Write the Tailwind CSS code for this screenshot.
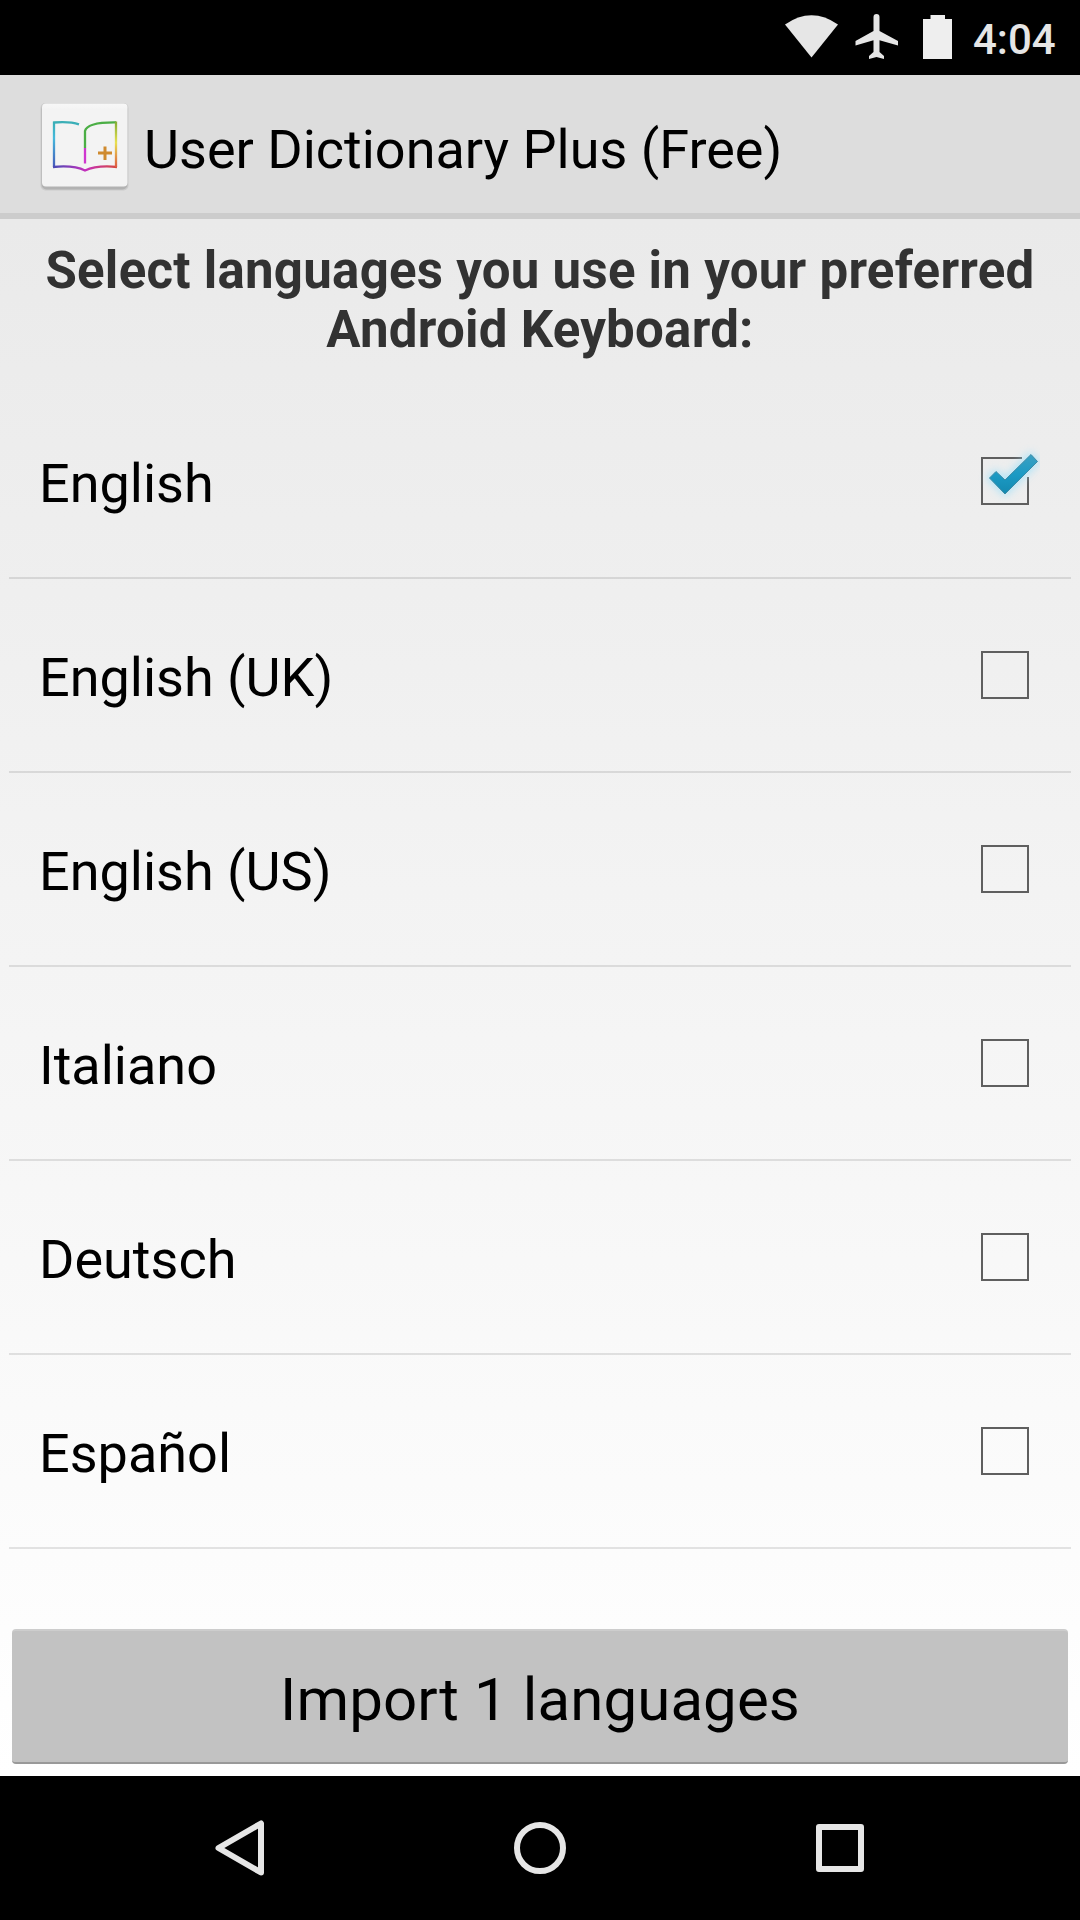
<!DOCTYPE html>
<html lang="en">
<head>
<meta charset="utf-8">
<title>User Dictionary Plus</title>
<script src="https://cdn.jsdelivr.net/npm/@tailwindcss/browser@4"></script>
</head>
<body class="w-[1080px] h-[1920px] overflow-hidden flex flex-col bg-black font-[Roboto,sans-serif] text-black">
<!-- status bar -->
<div class="h-[75px] shrink-0 flex justify-end">
  <svg class="w-[213px] h-[75px]" viewBox="760 0 213 75" fill="#e6e6e6">
    <path d="M785 24.5Q811.500 6 838 24.500L811.500 57.500Z"/>
    <path d="M876.500 14a3 3 0 0 1 3 3V31L898 41V45.500L879.500 40.300V52L884 56V59L876.500 57L869 59V56L873.500 52V40.300L855.500 45.500V41L873.500 31V17a3 3 0 0 1 3-3Z"/>
    <path fill="#eeeeee" d="M930.500 15H945V19H952V59H923V19H930.500Z"/>
  </svg>
  <div class="w-[107px] text-[42px] leading-[80px] font-medium text-[#e6e6e6]">4:04</div>
</div>
<!-- action bar -->
<header class="h-[144px] shrink-0 flex items-center bg-[#dddddd] border-b-[6px] border-[#cccccc] pl-9">
  <svg class="w-[96px] h-[96px]" viewBox="36 96 96 96" fill="none">
    <defs>
      <linearGradient id="left" x1="0" y1="122" x2="0" y2="168" gradientUnits="userSpaceOnUse"><stop stop-color="#3aaeb5"/><stop offset=".35" stop-color="#45b9dc"/><stop offset="1" stop-color="#4456b8"/></linearGradient>
      <linearGradient id="bottom" x1="54" y1="0" x2="117" y2="0" gradientUnits="userSpaceOnUse"><stop stop-color="#4a4ab4"/><stop offset=".5" stop-color="#c42fbd"/><stop offset="1" stop-color="#d6493c"/></linearGradient>
      <linearGradient id="right" x1="0" y1="122" x2="0" y2="168" gradientUnits="userSpaceOnUse"><stop stop-color="#83ad35"/><stop offset=".45" stop-color="#e8e04f"/><stop offset="1" stop-color="#dd5540"/></linearGradient>
      <linearGradient id="tile" x1="0" y1="103" x2="0" y2="187" gradientUnits="userSpaceOnUse"><stop stop-color="#f8f8f8"/><stop offset=".08" stop-color="#f3f3f3"/><stop offset="1" stop-color="#f3f3f3"/></linearGradient>
    </defs>
    <rect x="40.500" y="103" width="88" height="87.500" rx="5" fill="#cbcbcb"/>
    <rect x="41.500" y="104" width="86" height="85.500" rx="5" fill="#b2b2b2"/>
    <rect x="42" y="103.500" width="85.500" height="83" rx="4" fill="url(#tile)"/>
    <path d="M79 124.300Q70 121.300 54 122.500V167" stroke="url(#left)" stroke-width="2.300"/>
    <path d="M53 167Q74 165 85 170.500Q97 165 117 167" stroke="url(#bottom)" stroke-width="2.300"/>
    <path d="M85 148V131Q87 122 116 122.300" stroke="#4bae45" stroke-width="2.300"/>
    <path d="M116 121.500V167" stroke="url(#right)" stroke-width="2.300"/>
    <path d="M85 148V163.500" stroke="#cf36cf" stroke-width="2.300"/>
    <path d="M98 153H112M105 146.500V160" stroke="#cf8a2e" stroke-width="3"/>
  </svg>
  <h1 class="ml-[12px] pt-[11px] text-[54px] leading-[64px] whitespace-nowrap">User Dictionary Plus (Free)</h1>
</header>
<!-- content -->
<main class="h-[1557px] shrink-0 flex flex-col bg-linear-to-b from-[#eaeaea] to-white">
  <h2 class="h-[166px] pt-[22px] text-center text-[51px] leading-[59px] tracking-[0.26px] font-bold text-[#323232] whitespace-nowrap">Select languages you use in your preferred<br>Android Keyboard:</h2>
  <ul class="flex-1 mx-[9px]">
    <li class="h-[194px] border-b-2 border-black/10 flex items-center justify-between pl-[30px] pr-[31px] text-[54px]">
      <span class="leading-[64px] pt-[6px]">English</span>
      <svg class="w-[70px] h-[80px]" viewBox="970 441 70 80" fill="none">
        <defs>
          <filter id="glow" x="-50%" y="-50%" width="200%" height="200%"><feGaussianBlur stdDeviation="4"/></filter>
          <linearGradient id="tick" x1="0" y1="455" x2="0" y2="494" gradientUnits="userSpaceOnUse"><stop stop-color="#3aa0c2"/><stop offset=".5" stop-color="#1b9ac4"/><stop offset="1" stop-color="#1489b0"/></linearGradient>
        </defs>
        <path d="M1022 458H982V504H1028V477" stroke="#5f5f5f" stroke-width="2"/>
        <path d="M989 478L995.500 471.500L1005 480L1030.500 454.500L1038 461.500L1005 494Z" fill="#9be0fa" stroke="#9be0fa" stroke-width="4" opacity=".75" filter="url(#glow)"/>
        <path d="M989.500 478L996 471.500L1005 480L1031 454.500L1037.500 461.500L1005 494Z" fill="url(#tick)" stroke="#3c8ba6" stroke-width="1" stroke-linejoin="round"/>
      </svg>
    </li>
    <li class="h-[194px] border-b-2 border-black/10 flex items-center justify-between pl-[30px] pr-[42px] text-[54px]"><span class="leading-[64px] pt-[6px]">English (UK)</span><i class="size-12 border-2 border-[#5f5f5f]"></i></li>
    <li class="h-[194px] border-b-2 border-black/10 flex items-center justify-between pl-[30px] pr-[42px] text-[54px]"><span class="leading-[64px] pt-[6px]">English (US)</span><i class="size-12 border-2 border-[#5f5f5f]"></i></li>
    <li class="h-[194px] border-b-2 border-black/10 flex items-center justify-between pl-[30px] pr-[42px] text-[54px]"><span class="leading-[64px] pt-[6px]">Italiano</span><i class="size-12 border-2 border-[#5f5f5f]"></i></li>
    <li class="h-[194px] border-b-2 border-black/10 flex items-center justify-between pl-[30px] pr-[42px] text-[54px]"><span class="leading-[64px] pt-[6px]">Deutsch</span><i class="size-12 border-2 border-[#5f5f5f]"></i></li>
    <li class="h-[194px] border-b-2 border-black/10 flex items-center justify-between pl-[30px] pr-[42px] text-[54px]"><span class="leading-[64px] pt-[6px]">Español</span><i class="size-12 border-2 border-[#5f5f5f]"></i></li>
  </ul>
  <button class="h-[135px] mx-3 mb-3 rounded-[4px] bg-[#c2c2c2] border-t-2 border-b-2 border-t-[#cdcdcd] border-b-[#999999] text-[60px] leading-[70px] tracking-[0.1px] pt-[6px]">Import 1 languages</button>
</main>
<!-- navigation bar -->
<nav class="h-36 shrink-0 flex items-center">
  <svg class="w-full h-36" viewBox="0 1776 1080 144" fill="none" stroke="#e6e6e6" stroke-width="6" stroke-linejoin="round">
    <path d="M218.500 1848L261 1823.500V1872.500Z"/>
    <circle cx="540" cy="1848" r="23"/>
    <rect x="819" y="1827" width="42" height="42"/>
  </svg>
</nav>
</body>
</html>
